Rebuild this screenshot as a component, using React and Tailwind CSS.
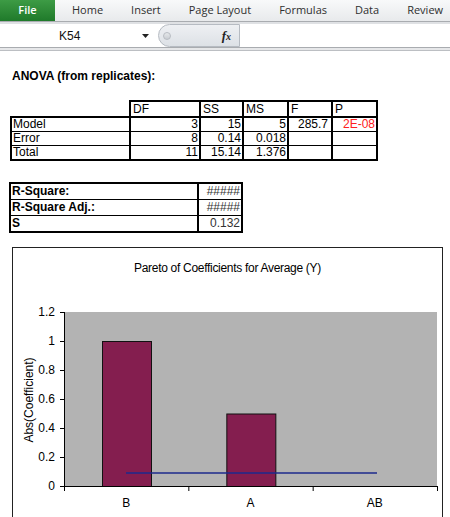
import React from "react";

const tabs = ["Home", "Insert", "Page Layout", "Formulas", "Data", "Review"];

const anovaRows = [
  { label: "Model", df: "3", ss: "15", ms: "5", f: "285.7", p: "2E-08" },
  { label: "Error", df: "8", ss: "0.14", ms: "0.018", f: "", p: "" },
  { label: "Total", df: "11", ss: "15.14", ms: "1.376", f: "", p: "" },
];

const fitRows = [
  { label: "R-Square:", value: "#####" },
  { label: "R-Square Adj.:", value: "#####" },
  { label: "S", value: "0.132" },
];

function Ribbon() {
  return (
    <div className="font-['Open_Sans',sans-serif]">
      <div className="flex h-[22px] items-stretch border-b border-[#a9acb0] bg-gradient-to-b from-[#f8f9fa] to-[#e8eaec]">
        <div className="flex w-[55px] items-center justify-center bg-gradient-to-b from-[#3d9b45] to-[#1f7a2a] text-[11px] font-semibold text-white">
          File
        </div>
        <div className="flex items-center gap-[28px] pl-[17px] text-[11px] text-[#2f2f2f]">
          {tabs.map((t) => (
            <span key={t}>{t}</span>
          ))}
        </div>
      </div>
      <div className="h-[2px] bg-[#dfe1e4]" />
      <div className="flex h-[23px] items-stretch bg-white">
        <div className="flex w-[158px] items-center">
          <span className="ml-[59px] font-['Liberation_Sans',sans-serif] text-[12px] text-[#111]">
            K54
          </span>
          <svg className="ml-auto mr-[9px]" width="7" height="4" viewBox="0 0 7 4">
            <polygon points="0,0 7,0 3.5,4" fill="#222" />
          </svg>
        </div>
        <div className="flex w-[82px] items-center rounded-l-full border border-[#b6bbc2] bg-gradient-to-b from-[#eef0f3] to-[#dde1e6]">
          <span className="ml-[4px] h-[8px] w-[8px] rounded-full border border-[#b8bcc2] bg-gradient-to-b from-[#e6e8eb] to-[#c9cdd2]" />
          <span className="ml-auto mr-[8px] font-['Liberation_Serif',serif] text-[13px] font-bold italic leading-none text-[#222]">
            f<span className="text-[10px]">x</span>
          </span>
        </div>
        <div className="flex-1 bg-white" />
      </div>
      <div className="h-px bg-[#a9acb0]" />
      <div className="h-[2px] bg-[#e6e7e9]" />
      <div className="h-px bg-[#bcbfc3]" />
    </div>
  );
}

function AnovaTable() {
  return (
    <div className="ml-[10px] mt-[17px] w-[368px] text-[12px] leading-[13px] text-black">
      <div className="ml-[119px] grid grid-cols-[68px_41px_43px_42px_43px] gap-x-[2px] bg-black px-[2px] pt-[2px]">
        {["DF", "SS", "MS", "F", "P"].map((h) => (
          <div key={h} className="h-[14px] bg-white pl-[2px] leading-[14px]">
            {h}
          </div>
        ))}
      </div>
      <div className="grid grid-cols-[117px_68px_41px_43px_42px_43px] gap-x-[2px] gap-y-px bg-black p-[2px]">
        {anovaRows.map((r) => (
          <React.Fragment key={r.label}>
            <div className="h-[13px] bg-white pl-[1px]">{r.label}</div>
            <div className="h-[13px] bg-white pr-[1px] text-right">{r.df}</div>
            <div className="h-[13px] bg-white pr-[1px] text-right">{r.ss}</div>
            <div className="h-[13px] bg-white pr-[1px] text-right">{r.ms}</div>
            <div className="h-[13px] bg-white pr-[3px] text-right">{r.f}</div>
            <div className="h-[13px] bg-white pr-[1px] text-right text-[#ff2020]">{r.p}</div>
          </React.Fragment>
        ))}
      </div>
    </div>
  );
}

function FitTable() {
  return (
    <div className="ml-[9px] mt-[21px] grid w-[234px] grid-cols-[186px_42px] gap-x-[2px] gap-y-px bg-black p-[2px] text-[12px] leading-[15px]">
      {fitRows.map((r) => (
        <React.Fragment key={r.label}>
          <div className="h-[15px] bg-white pl-[1px] font-bold">{r.label}</div>
          <div className="h-[15px] bg-white pr-[1px] text-right text-[#333]">{r.value}</div>
        </React.Fragment>
      ))}
    </div>
  );
}

function ParetoChart() {
  // plot area in svg coords
  const left = 51;
  const right = 424;
  const top = 24;
  const bottom = 198;
  const yScale = (v) => bottom - (v / 1.2) * (bottom - top);
  const yTicks = [0, 0.2, 0.4, 0.6, 0.8, 1, 1.2];
  const cats = [
    { label: "B", value: 1 },
    { label: "A", value: 0.5 },
    { label: "AB", value: 0 },
  ];
  const band = (right - left) / cats.length;

  return (
    <svg width="429" height="240" className="block font-['Liberation_Sans',sans-serif]">
      <rect x={left} y={top} width={right - left} height={bottom - top} fill="#b3b3b3" />
      <line x1={left + 0.5} y1={top} x2={left + 0.5} y2={bottom} stroke="#000" />
      {yTicks.map((t) => (
        <g key={t}>
          <line x1={left - 4} y1={yScale(t) + 0.5} x2={left} y2={yScale(t) + 0.5} stroke="#000" />
          <text x={42} y={yScale(t) + 4} fontSize="12" textAnchor="end" fill="#000">
            {t === 0 || t === 1 ? t : t.toFixed(1)}
          </text>
        </g>
      ))}
      {cats.map((c, i) =>
        c.value > 0 ? (
          <rect
            key={c.label}
            x={left + i * band + 38.5}
            y={yScale(c.value) + 0.5}
            width={49}
            height={bottom - yScale(c.value)}
            fill="#841e4f"
            stroke="#111"
          />
        ) : null
      )}
      <line x1={left} y1={bottom + 0.5} x2={right} y2={bottom + 0.5} stroke="#000" />
      {[0, 1, 2, 3].map((i) => (
        <line
          key={i}
          x1={left + i * band + 0.5}
          y1={bottom}
          x2={left + i * band + 0.5}
          y2={bottom + 5}
          stroke="#000"
        />
      ))}
      {cats.map((c, i) => (
        <text key={c.label} x={left + i * band + band / 2} y={219} fontSize="12" textAnchor="middle" fill="#000">
          {c.label}
        </text>
      ))}
      <line x1={113} y1={185} x2={364} y2={185} stroke="#1c2a8c" strokeWidth="1.5" />
      <text
        x={20}
        y={112}
        fontSize="12"
        textAnchor="middle"
        fill="#000"
        transform="rotate(-90 20 112)"
      >
        Abs(Coefficient)
      </text>
    </svg>
  );
}

export default function App() {
  return (
    <div className="h-[517px] w-[450px] overflow-hidden bg-white font-['Liberation_Sans',Arial,sans-serif]">
      <Ribbon />
      <div className="ml-[12px] mt-[18px] text-[12px] font-bold leading-[14px] text-black">
        ANOVA (from replicates):
      </div>
      <AnovaTable />
      <FitTable />
      <div className="ml-[12px] mt-[14px] w-[431px] border border-[#222]">
        <div className="flex h-[40px] items-center justify-center text-[12px] tracking-[-0.3px] text-black">
          Pareto of Coefficients for Average (Y)
        </div>
        <ParetoChart />
      </div>
    </div>
  );
}
